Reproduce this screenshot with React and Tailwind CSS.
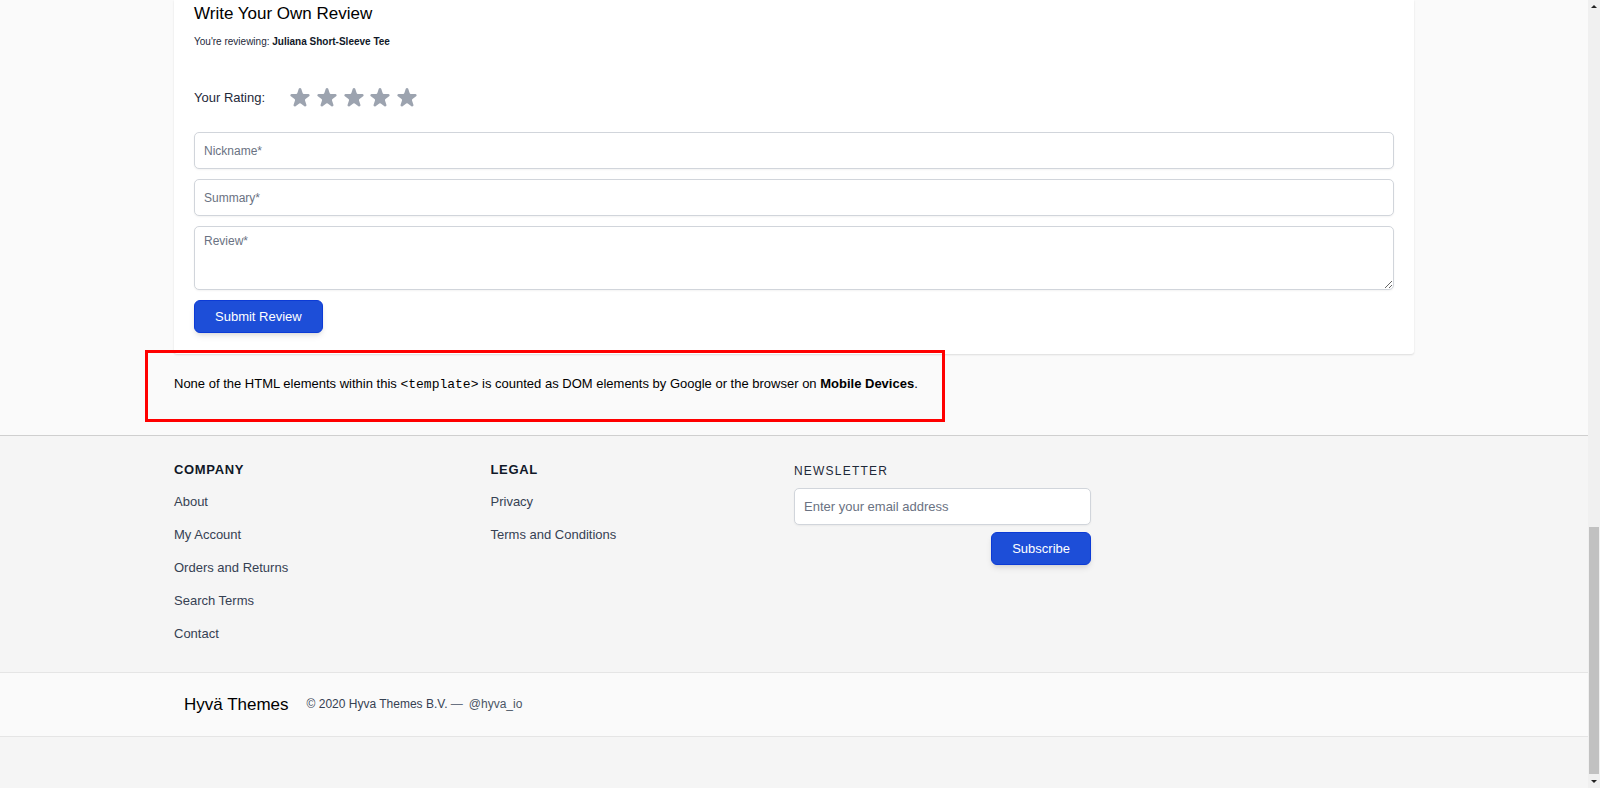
import React from 'react';

const COMPANY_LINKS = ['About', 'My Account', 'Orders and Returns', 'Search Terms', 'Contact'];
const LEGAL_LINKS = ['Privacy', 'Terms and Conditions'];

const fieldClass =
  'block w-full rounded-[5px] border border-[#d1d5db] bg-white px-[9px] shadow-xs placeholder:text-gray-500';

const StarIcon = () => (
  <svg className="block size-[26px]" viewBox="0 0 20 20" fill="currentColor" aria-hidden="true">
    <path d="M9.049 2.927c.3-.921 1.603-.921 1.902 0l1.07 3.292a1 1 0 00.95.69h3.462c.969 0 1.371 1.24.588 1.81l-2.8 2.034a1 1 0 00-.364 1.118l1.07 3.292c.3.921-.755 1.688-1.54 1.118l-2.8-2.034a1 1 0 00-1.175 0l-2.8 2.034c-.784.57-1.838-.197-1.539-1.118l1.07-3.292a1 1 0 00-.364-1.118L2.98 8.72c-.783-.57-.38-1.81.588-1.81h3.461a1 1 0 00.951-.69l1.07-3.292z" />
  </svg>
);

const PrimaryButton = ({ children }) => (
  <button
    type="button"
    className="h-[33px] rounded-[6px] border border-[#0c3bd6] bg-[#1d4ed8] px-5 text-white shadow-md"
  >
    {children}
  </button>
);

const StarRating = () => (
  <fieldset className="flex h-6 items-center">
    <legend className="float-left w-[93px] text-gray-800">Your Rating:</legend>
    <div className="flex w-[133px] justify-between text-[#9ca3af]">
      {[1, 2, 3, 4, 5].map((value) => (
        <label key={value} className="relative cursor-pointer">
          <input type="radio" name="rating" value={value} aria-label={`${value} stars`} className="sr-only" />
          <StarIcon />
        </label>
      ))}
    </div>
  </fieldset>
);

const ReviewForm = () => (
  <section className="rounded-b-[3px] bg-white px-5 pt-[2px] pb-[21px] shadow-[0_1px_2px_rgba(0,0,0,0.12)]">
    <h2 className="text-[17px] leading-6 text-black">Write Your Own Review</h2>
    <p className="mt-2 text-[10px] leading-4 text-gray-800">
      You're reviewing: <strong className="text-gray-900">Juliana Short-Sleeve Tee</strong>
    </p>
    <form className="mt-9">
      <StarRating />
      <div className="mt-[22px] flex flex-col items-start gap-[10px]">
        <input type="text" aria-label="Nickname" placeholder="Nickname*" className={`${fieldClass} h-[37px] text-[12px]`} />
        <input type="text" aria-label="Summary" placeholder="Summary*" className={`${fieldClass} h-[37px] text-[12px]`} />
        <textarea
          aria-label="Review"
          placeholder="Review*"
          className={`${fieldClass} h-16 resize py-[5px] text-[12px] leading-[18px]`}
        />
        <PrimaryButton>Submit Review</PrimaryButton>
      </div>
    </form>
  </section>
);

const LinkColumn = ({ title, links }) => (
  <nav aria-label={title}>
    <h2 className="leading-5 font-bold tracking-wider text-gray-900 uppercase">{title}</h2>
    <ul className="mt-3 flex flex-col gap-[13px]">
      {links.map((link) => (
        <li key={link} className="leading-5">
          <a href="#" className="text-gray-700">{link}</a>
        </li>
      ))}
    </ul>
  </nav>
);

const Newsletter = () => (
  <form className="flex w-1/4 flex-col items-end pr-[13px]">
    <label htmlFor="newsletter" className="w-full text-[12px] leading-[22px] tracking-widest text-gray-800 uppercase">
      Newsletter
    </label>
    <input
      id="newsletter"
      type="email"
      placeholder="Enter your email address"
      className={`${fieldClass} mt-[6px] mb-[7px] h-[37px]`}
    />
    <PrimaryButton>Subscribe</PrimaryButton>
  </form>
);

// Page scrollbar: arrows at both ends, thumb resting at the bottom
const Scrollbar = () => (
  <div className="flex w-3 shrink-0 flex-col bg-[#f0f0f0] px-px" aria-hidden="true">
    <svg className="h-[13px] w-[10px]" viewBox="0 0 10 13">
      <path d="M2 8L5 5L8 8Z" fill="#222" />
    </svg>
    <div className="flex-[514]" />
    <div className="flex-[247] bg-[#c1c1c1]" />
    <svg className="h-[14px] w-[10px]" viewBox="0 0 10 14">
      <path d="M2 6L5 9L8 6Z" fill="#222" />
    </svg>
  </div>
);

const App = () => (
  <div className="flex min-h-screen bg-[#f5f5f5] font-['Liberation_Sans',Arial,sans-serif] text-[13px]">
    <div className="min-w-0 flex-1">
      <main className="border-b border-[#cfcfcf] bg-[#fafafa]">
        <div className="mx-auto max-w-[1240px]">
          <ReviewForm />
          <div className="relative pt-5 pb-10">
            <p className="leading-5 text-black">
              None of the HTML elements within this{' '}
              <code className="font-['Liberation_Mono',monospace]">&lt;template&gt;</code> is counted as DOM
              elements by Google or the browser on <strong>Mobile Devices</strong>.
            </p>
            <div className="pointer-events-none absolute -top-1 -left-[29px] h-[72px] w-[800px] border-3 border-[#ff0000]" />
          </div>
        </div>
      </main>

      <footer>
        <div className="mx-auto flex max-w-[1240px] pt-6 pb-7">
          <div className="grid w-1/2 grid-cols-2 gap-[13px]">
            <LinkColumn title="Company" links={COMPANY_LINKS} />
            <LinkColumn title="Legal" links={LEGAL_LINKS} />
          </div>
          <Newsletter />
        </div>
        <div className="border-y border-[#e5e5e5] bg-[#fafafa]">
          <div className="mx-auto flex max-w-[1240px] items-center gap-[18px] px-[10px] py-[19px]">
            <span className="text-[17px] leading-[25px] text-black">Hyvä Themes</span>
            <p className="text-[12px] leading-[25px] text-gray-700">
              © 2020 Hyva Themes B.V. <span className="text-gray-500">—</span>
              <a href="#" className="ml-[6px] text-gray-600">@hyva_io</a>
            </p>
          </div>
        </div>
      </footer>
    </div>
    <Scrollbar />
  </div>
);

export default App;
